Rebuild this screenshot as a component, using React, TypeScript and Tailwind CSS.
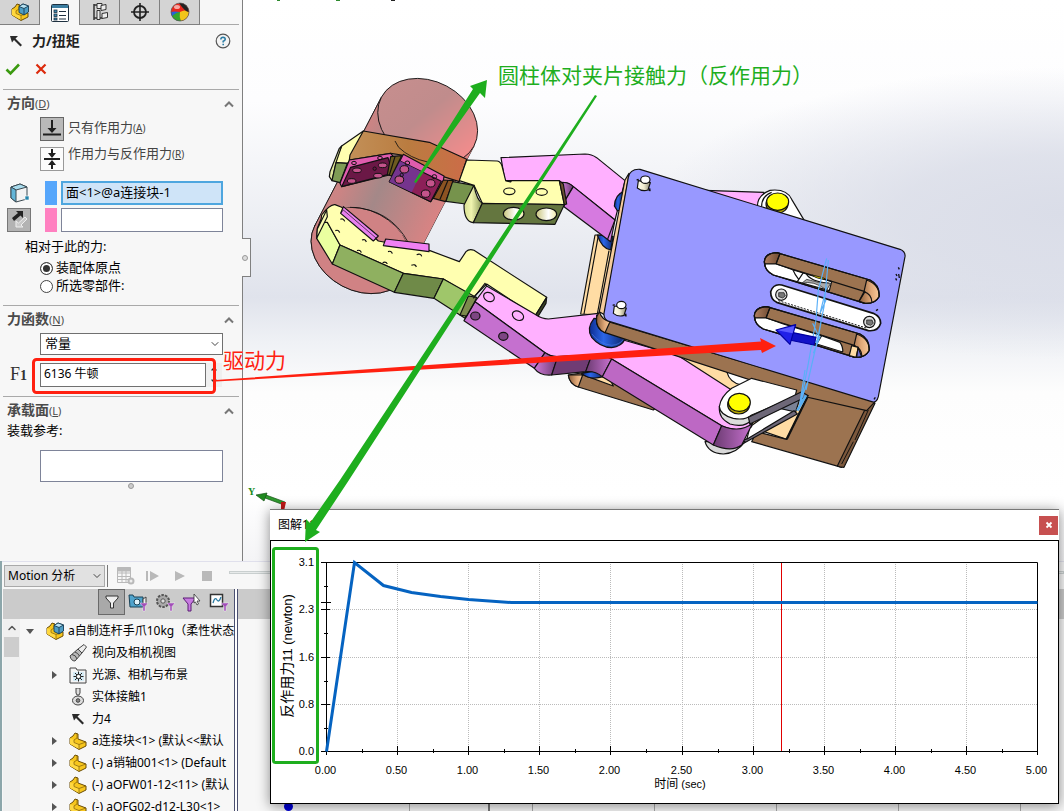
import type { ReactNode } from 'react';
import { ChevronDown, ChevronUp } from 'lucide-react';

/* ---------- small icons ---------- */

function PartIcon({ assembly = false }: { assembly?: boolean }) {
  return (
    <svg viewBox="0 0 18 18" className="w-[18px] h-[18px] shrink-0" strokeLinejoin="round">
      <path d="M1 6 L4 4 L6 1 L9 2 L9 7 L17 10 L17 14 L10 17.5 L1 12 Z" fill="#f7c61c" stroke="#6b4d05" />
      <path d="M1 6 L5 8 L5 10 L10 12.5 L10 17 L1 12 Z" fill="#ffd840" />
      <path d="M5 8 L8 6 L8 2 M10 12.500 L17 10 M5 8 L5 10.500 L10 12.500 L10 17" fill="none" stroke="#8d6a0c" strokeWidth=".8" />
      {assembly && (
        <g stroke="#173d55" strokeWidth=".9">
          <path d="M8 3.500 L12 1 L17.500 3 L17.500 9 L13 12 L8 9.500 Z" fill="#4e9dc4" />
          <path d="M8 3.500 L12 1 L17.500 3 L13 5.500 Z" fill="#b8e2f2" />
          <path d="M13 5.500 L13 12" />
        </g>
      )}
    </svg>
  );
}

function PropertyIcon() {
  return (
    <svg viewBox="0 0 20 20" className="w-5 h-5">
      <rect x="1.500" y="1.500" width="17" height="17" rx="1" fill="#fff" stroke="#1e3040" />
      <rect x="2" y="2" width="16" height="3" fill="#3b7da0" />
      <g fill="#3b8bb4" stroke="#1e3040" strokeWidth=".8">
        <rect x="4" y="7" width="3" height="2.500" />
        <rect x="4" y="11" width="3" height="2.500" />
        <rect x="4" y="15" width="3" height="2" />
      </g>
      <path d="M9 8.500 H16 M9 12.500 H16 M9 16 H16" stroke="#1e3040" strokeWidth="1.200" />
    </svg>
  );
}

function ConfigIcon() {
  return (
    <svg viewBox="0 0 20 20" className="w-5 h-5" fill="#eee" stroke="#333">
      <path d="M4 2 V18 M4 3 H8 M4 16 H12" fill="none" strokeWidth="1.500" />
      <path d="M7 1.500 H12 V6.500 H7 Z M7 8.500 H10 V17.500 H7 Z" />
      <path d="M11 3.500 L16 2.500 V7.500 L11 8.500 Z M12 11.500 L17.500 10.500 V15.500 L12 16.500 Z" />
    </svg>
  );
}

function TargetIcon() {
  return (
    <svg viewBox="0 0 20 20" className="w-5 h-5" fill="none" stroke="#222">
      <circle cx="10" cy="10" r="6" strokeWidth="1.800" />
      <path d="M10 1 V19 M1 10 H19" strokeWidth="1.600" />
    </svg>
  );
}

function AppearanceIcon() {
  return (
    <svg viewBox="0 0 20 20" className="w-5 h-5">
      <circle cx="10" cy="10" r="9" fill="#e8271c" />
      <path d="M1 10 Q4 9 10 10 L9 19 A9 9 0 0 1 1 10 Z" fill="#2563d8" />
      <path d="M2 14 Q7 10 10 10 L11 19 A9 9 0 0 1 2 14 Z" fill="#35a52c" />
      <path d="M10 10 Q15 7 19 10 A9 9 0 0 1 11 19 Q9 15 10 10 Z" fill="#f2c51a" />
      <path d="M9 1 A9 9 0 0 1 19 10 Q15 10 9 1 Z" fill="#222" />
      <ellipse cx="7" cy="5" rx="3" ry="2" fill="#fff" opacity=".6" />
      <circle cx="10" cy="10" r="9" fill="none" stroke="#555" strokeWidth=".7" />
    </svg>
  );
}

function ForceIcon() {
  return (
    <svg viewBox="0 0 14 14" className="w-[14px] h-[14px] shrink-0">
      <path d="M1 2 L9 2 L6.500 4.500 L13 11 L11.500 12.500 L5 6 L3 8.500 Z" fill="#2b2b2b" />
    </svg>
  );
}

function FunnelMark() {
  return <path d="M12 10 H20 L17 13.500 V18 H15 V13.500 Z" fill="#a24fb8" stroke="#fff" strokeWidth=".4" />;
}

function Chevron() {
  return (
    <svg viewBox="0 0 12 8" className="w-3 h-2">
      <path d="M2 6.500 L6 2.500 L10 6.500" fill="none" stroke="#777" strokeWidth="2" />
    </svg>
  );
}

/* ---------- property panel ---------- */

const panelTabs = [
  { name: '特征', icon: <PartIcon assembly /> },
  { name: '属性', icon: <PropertyIcon />, active: true },
  { name: '配置', icon: <ConfigIcon /> },
  { name: '尺寸', icon: <TargetIcon /> },
  { name: '外观', icon: <AppearanceIcon /> },
];

function SectionHead({ title, hotkey }: { title: string; hotkey: string }) {
  return (
    <div className="mx-[3px] border-t border-[#a9a9a9] h-7 pl-1 pr-1 flex items-center justify-between">
      <h3 className="text-sm leading-4 font-bold text-[#4a4a4a]">
        {title}
        <span className="text-[11px] font-normal">
          (<u>{hotkey}</u>)
        </span>
      </h3>
      <button aria-label={title}>
        <Chevron />
      </button>
    </div>
  );
}

function ModeRow({ label, hotkey, pressed, children }: { label: string; hotkey: string; pressed?: boolean; children: ReactNode }) {
  return (
    <button
      className={
        pressed
          ? 'flex items-start h-6 gap-1 pl-10 text-[13px] leading-5 text-[#444]'
          : 'flex items-start h-6 gap-1 pl-10 text-[13px] leading-3 text-[#444]'
      }
      aria-pressed={pressed}
    >
      <span className={pressed ? 'w-6 h-6 border border-[#666] bg-[#b9b9b9]' : 'w-6 h-6 border border-[#999] bg-[#fcfcfc]'}>
        <svg viewBox="0 0 22 22" className="w-[22px] h-[22px]" fill="#1f1f1f" stroke="#1f1f1f">
          {children}
        </svg>
      </span>
      <span>
        {label}
        <span className="text-[10px]">
          (<u>{hotkey}</u>)
        </span>
      </span>
    </button>
  );
}

function PropertyPanel() {
  return (
    <aside className="relative z-10 w-[243px] shrink-0 border-r border-[#808080] bg-[#f7f7f7] flex flex-col">
      <nav className="flex mr-[3px] h-[25px]">
        {panelTabs.map(t => (
          <button
            key={t.name}
            aria-label={t.name}
            className={
              t.active
                ? 'w-10 border-r border-[#808080] flex items-center justify-center'
                : 'w-10 border-r border-b border-[#808080] bg-[#d4d4d4] flex items-center justify-center'
            }
          >
            {t.icon}
          </button>
        ))}
        <span className="flex-1 border-b border-[#a9a9a9]" />
      </nav>

      <header className="h-8 pl-[9px] pr-[11px] flex items-center">
        <ForceIcon />
        <h2 className="ml-[9px] text-sm font-bold text-[#222]">力/扭矩</h2>
        <button aria-label="帮助" className="ml-auto">
          <svg viewBox="0 0 16 16" className="w-4 h-4">
            <circle cx="8" cy="8" r="6.800" fill="#f4f4f4" stroke="#555" strokeWidth="1.200" />
            <path d="M5.800 6.500 Q6 4.300 8 4.300 Q10.300 4.400 10.200 6.300 Q10 7.600 8.200 8.300 L8.200 9.500 M8.200 10.800 V12.300" fill="none" stroke="#2b7ba3" strokeWidth="1.600" />
          </svg>
        </button>
      </header>
      <div className="h-6 pl-[5px] flex items-center gap-[14px] mb-2">
        <button aria-label="确定">
          <svg viewBox="0 0 16 14" className="w-4 h-[14px]">
            <path d="M1.500 7.500 L5.500 11.500 L14 2.500" fill="none" stroke="#3b9a10" strokeWidth="2.600" />
          </svg>
        </button>
        <button aria-label="取消">
          <svg viewBox="0 0 12 12" className="w-3 h-3">
            <path d="M1.500 1.500 L10.500 10.500 M10.500 1.500 L1.500 10.500" stroke="#dc2a0c" strokeWidth="2.200" />
          </svg>
        </button>
      </div>

      <SectionHead title="方向" hotkey="D" />
      <ModeRow label="只有作用力" hotkey="A" pressed>
        <path d="M11 2 V13 M2 16.500 H20" strokeWidth="2" />
        <path d="M6.500 10 H15.500 L11 15 Z" stroke="none" />
      </ModeRow>
      <div className="h-[6px]" />
      <ModeRow label="作用力与反作用力" hotkey="R">
        <path d="M11 1 V6 M11 21 V16 M3 11 H19" strokeWidth="2" />
        <path d="M7 5 H15 L11 10 Z M7 17 H15 L11 12 Z" stroke="none" />
      </ModeRow>

      <div className="mt-[10px] grid grid-cols-[34px_12px_162px] gap-x-1 gap-y-[3px] pl-[7px] items-center">
        <svg viewBox="0 0 24 24" className="w-6 h-6" strokeLinejoin="round">
          <path d="M4 6 L13 3 L20 6 L20 18 L9 21 L4 17 Z" fill="#f3f3f3" stroke="#3b4a52" />
          <path d="M4 6 L13 3 L20 6 L9 9 Z" fill="#a9dcee" stroke="#3b4a52" />
          <path d="M4 6 L9 9 L9 21 L4 17 Z" fill="#62b5d8" stroke="#3b4a52" />
          <rect x="18" y="15" width="4" height="4" fill="#2585ac" stroke="#fff" strokeWidth=".6" />
        </svg>
        <span className="h-6 bg-[#56a6fb]" />
        <input
          aria-label="作用力面"
          defaultValue="面<1>@a连接块-1"
          className="h-6 w-full border-2 border-[#4ea6df] bg-[#cfe4f8] px-[3px] pb-1 text-[13px] text-black outline-none"
        />
        <button aria-label="反向" className="w-6 h-6 border border-[#777] bg-[#b3b3b3]">
          <svg viewBox="0 0 22 22" className="w-[22px] h-[22px]">
            <path d="M4 9 L10 4 L8 2 H15 V9 L12.500 6.500 L6 12 Z" fill="#222" />
            <path d="M19 10 L13 16 L15 18 H8 V12 L10.500 14 L17 8 Z" fill="#c9c9c9" stroke="#eee" />
          </svg>
        </button>
        <span className="h-6 bg-[#ff80c0]" />
        <input aria-label="反作用力面" className="h-6 w-full border border-[#7e8499] bg-white px-1 text-[13px] outline-none" />
      </div>

      <fieldset className="mt-1 text-[13px] text-black">
        <legend className="ml-[25px] h-5 leading-5">相对于此的力:</legend>
        <div className="mt-[3px] mb-[10px] ml-10">
          {['装配体原点', '所选零部件:'].map((name, i) => (
            <label key={name} className="flex items-center gap-[3px] h-[18px]">
              <input
                type="radio"
                name="origin"
                defaultChecked={i === 0}
                className="appearance-none w-[13px] h-[13px] rounded-full border border-[#444] bg-white checked:bg-[#333] checked:shadow-[inset_0_0_0_2px_white]"
              />
              {name}
            </label>
          ))}
        </div>
      </fieldset>

      <SectionHead title="力函数" hotkey="N" />
      <div className="ml-10 mr-[19px] relative">
        <select aria-label="力函数" className="appearance-none block w-full h-[22px] border border-[#707070] bg-white pl-1 pb-[3px] text-[13px] text-black">
          <option>常量</option>
        </select>
        <ChevronDown className="absolute right-[2px] top-[5px] w-3 h-3 text-[#444] pointer-events-none" />
      </div>
      <div className="mt-2 mb-[9px] h-6 pl-[10px] flex items-center">
        <label htmlFor="force" className="w-[30px] font-['Liberation_Serif',serif] text-lg leading-5 text-[#333]">
          F<span className="text-sm font-bold">1</span>
        </label>
        <input id="force" defaultValue="6136 牛顿" className="w-[166px] h-6 border border-[#707070] bg-white px-[3px] pb-1 text-xs text-black outline-none" />
        <span className="flex flex-col justify-between w-4 h-6 py-[2px] items-center bg-[#efefef]">
          <button aria-label="增大"><ChevronUp className="w-2 h-2 text-[#333]" strokeWidth={4} /></button>
          <button aria-label="减小"><ChevronDown className="w-2 h-2 text-[#333]" strokeWidth={4} /></button>
        </span>
      </div>

      <SectionHead title="承载面" hotkey="L" />
      <label htmlFor="bearing" className="ml-[7px] text-[13px] leading-3 text-black">装载参考:</label>
      <textarea id="bearing" className="mt-[14px] ml-10 mr-[19px] h-8 border border-[#7e8499] bg-white resize-none outline-none" />
      <span className="mt-px ml-[128px] w-[6px] h-[6px] rounded-full border border-[#999] bg-[#ccc]" />

      <button aria-label="折叠" className="absolute -right-[9px] top-[238px] w-[9px] h-[39px] border border-l-0 border-[#808080] bg-[#f7f7f7] flex items-center">
        <span className="w-[6px] h-[6px] rounded-full border border-[#999] bg-[#ddd]" />
      </button>
    </aside>
  );
}

/* ---------- 3D model ---------- */

const slot = 'M613 365 Q615 340 650 338 L930 420 Q960 435 957 470 Q945 492 915 490 L640 405 Q612 390 613 365 Z';

function Slot() {
  return (
    <g>
      <path d={slot} fill="#9c7350" />
      <path d="M613 365 Q615 340 650 338 L660 340 L648 372 L615 372 Z" fill="url(#bore)" />
      <path d="M615 372 L650 372 L700 390 L815 425 L808 452 L640 405 Q615 392 615 372 Z" fill="#fff" />
      <path d="M920 420 Q960 435 957 470 Q945 492 915 490 L897 484 L912 455 Z" fill="url(#tan)" />
      <path d="M648 372 L915 455 L897 484 M912 455 Q935 462 936 488 M660 341 L648 372" fill="none" />
      <path d={slot} fill="none" />
    </g>
  );
}

function Pin({ x, y }: { x: number; y: number }) {
  return (
    <g transform={`translate(${x} ${y})`}>
      <path d="M-22 -10 L-16 -12 M14 20 L18 22 L17 15" strokeWidth="4" />
      <path d="M-17 -8 L-20 14 Q-5 26 12 20 L19 -2 Z" fill="url(#pin)" />
      <ellipse cx="4" cy="-11" rx="14" ry="11" fill="#fff" />
    </g>
  );
}

function Model() {
  return (
    <svg viewBox="243 0 821 561" preserveAspectRatio="xMinYMin slice" className="block w-full h-full" strokeLinejoin="round">
      <defs>
        <linearGradient id="face" x1="0" x2="1" y1=".3" y2=".6">
          <stop offset="0" stopColor="#c68e8e" /><stop offset=".45" stopColor="#c08c8c" /><stop offset="1" stopColor="#f28c8c" />
        </linearGradient>
        <linearGradient id="body" x1="0" x2="1" y1="0" y2=".45">
          <stop offset="0" stopColor="#d98a8a" /><stop offset=".35" stopColor="#cb8484" /><stop offset=".55" stopColor="#a48888" /><stop offset="1" stopColor="#e58282" />
        </linearGradient>
        <linearGradient id="orange">
          <stop offset="0" stopColor="#c29058" /><stop offset=".5" stopColor="#ba7c40" /><stop offset="1" stopColor="#cc6c48" />
        </linearGradient>
        <linearGradient id="tan">
          <stop offset="0" stopColor="#8a5c38" /><stop offset=".6" stopColor="#e0a878" /><stop offset="1" stopColor="#f8c898" />
        </linearGradient>
        <linearGradient id="bore">
          <stop offset="0" stopColor="#b08060" /><stop offset="1" stopColor="#6f4a32" />
        </linearGradient>
        <linearGradient id="bend">
          <stop offset="0" stopColor="#d07ad8" /><stop offset="1" stopColor="#6a3a70" />
        </linearGradient>
        <linearGradient id="blend">
          <stop offset="0" stopColor="#6a3a70" /><stop offset="1" stopColor="#c872d0" />
        </linearGradient>
        <linearGradient id="roller">
          <stop offset="0" stopColor="#0c2c90" /><stop offset=".4" stopColor="#2c66e8" /><stop offset="1" stopColor="#0c2468" />
        </linearGradient>
        <linearGradient id="hole">
          <stop offset="0" stopColor="#c8c47c" /><stop offset=".6" stopColor="#fff" /><stop offset="1" stopColor="#efe9a8" />
        </linearGradient>
        <linearGradient id="pin">
          <stop offset="0" stopColor="#fffff0" /><stop offset=".5" stopColor="#f0ecd0" /><stop offset="1" stopColor="#8c8870" />
        </linearGradient>
        <linearGradient id="olive">
          <stop offset="0" stopColor="#d8e090" /><stop offset=".4" stopColor="#f0f4b0" /><stop offset="1" stopColor="#8a9858" />
        </linearGradient>
      </defs>

      {/* bits of geometry cut off by the toolbar */}
      <path d="M277 0 h3 M336 0 h4" stroke="#2f8a2f" strokeWidth="2" />
      <path d="M391 0 h4" stroke="#222" strokeWidth="2" />

      {/* rear frame, upper pink arm, rear housing */}
      <g transform="translate(560 140) scale(.33333)" stroke="#111" strokeWidth="3.500">
        <path d="M105 285 L155 285 L155 330 L118 525 L62 522 Z" fill="#ffdca4" />
        <path d="M115 287 L72 522 M147 332 L112 522" fill="none" />
        <path d="M112 285 Q125 325 152 330 L160 290 Z" fill="url(#roller)" />
        <path d="M-177 53 L75 42 Q95 42 110 53 L195 122 L165 240 L40 140 Q25 127 5 127 L-165 125 Z" fill="#ffb0ff" />
        <path d="M190 155 Q165 165 163 198 L172 212 L190 212 Z" fill="url(#roller)" />
        <path d="M5 128 Q25 125 40 140 L15 182 L5 165 Z" fill="url(#bend)" />
        <path d="M40 140 L165 240 L152 305 L12 200 L15 182 Z" fill="#d67ae0" />
        <path d="M165 240 L143 297" fill="none" />
        <path d="M435 151 L612 157 L595 202 Z" fill="#ffb0ff" />
        <path d="M592 200 Q592 165 630 151 Q680 145 695 178 L735 245 Z" fill="#fff" />
        <path d="M605 205 Q603 168 635 157" fill="none" />
        <ellipse cx="651" cy="192" rx="33" ry="28" fill="#b7a800" />
        <ellipse cx="653" cy="185" rx="33" ry="26" fill="#ffff00" />
      </g>

      {/* cylinder and upper finger, seen through it */}
      <g transform="translate(300 60) scale(.33333)" stroke="#111" strokeWidth="3.500">
        <g strokeWidth="2.500">
          <path d="M244 112 L44 498 A157 121 28 0 0 322 644 L522 258 Z" fill="url(#body)" />
          <ellipse cx="183" cy="571" rx="157" ry="121" transform="rotate(28 183 571)" fill="#d08284" />
          <path d="M244 112 L44 498 Q120 430 180 442 Q290 455 345 600 L522 258 Z" fill="url(#body)" stroke="none" />
          <path d="M150 442 Q270 445 325 548 M244 112 L44 498" fill="none" />
          <ellipse cx="383" cy="185" rx="157" ry="121" transform="rotate(28 383 185)" fill="url(#face)" />
        </g>
        <path d="M190 213 L125 258 L103 308 L142 310 L165 285 Z" fill="#ffffb0" />
        <path d="M125 258 L118 265 L90 335 L88 350 L96 362 L108 308 Z" fill="#dfe79c" />
        <path d="M108 308 L142 310 L120 368 L96 362 Z" fill="#7f9c55" />
        <path d="M190 213 L388 247 L500 298 L478 365 L430 350 L305 285 L272 280 L148 300 L150 285 Z" fill="url(#orange)" />
        <path d="M383 306 Q330 295 296 262 L285 243" fill="none" strokeWidth="2.500" />
        <path d="M148 300 L272 280 L282 292 L268 345 L125 380 L120 370 Z" fill="#e05cae" />
        <path d="M152 322 L264 293 L276 330 L266 343 L125 380 Z" fill="#6b1846" />
        <path d="M272 290 L305 287 L275 348 L262 344 Z" fill="#6d5a20" />
        <path d="M285 290 L268 345" />
        <path d="M310 283 L432 348 L430 365 L392 425 L268 365 Z" fill="#e05cae" />
        <path d="M300 303 L424 364 L392 425 L268 365 Z" fill="#8c2058" />
        <path d="M300 303 L365 335 L335 397 L268 365 Z" fill="#75348e" stroke="none" />
        <path d="M430 360 L460 362 L437 425 L400 415 Z" fill="#8c5322" />
        <path d="M444 361 L420 418" />
        <g fill="#c4548c" strokeWidth="3">
          <ellipse cx="171" cy="331" rx="13" ry="7" /><ellipse cx="248" cy="316" rx="13" ry="7" />
          <ellipse cx="155" cy="363" rx="13" ry="7" /><ellipse cx="234" cy="347" rx="13" ry="7" />
          <ellipse cx="313" cy="328" rx="13" ry="11" /><ellipse cx="392" cy="370" rx="13" ry="11" />
          <ellipse cx="298" cy="359" rx="13" ry="11" /><ellipse cx="377" cy="401" rx="13" ry="11" />
        </g>
        <g fill="none" strokeWidth="3">
          <ellipse cx="162" cy="309" rx="7" ry="5" /><ellipse cx="240" cy="294" rx="7" ry="5" />
          <ellipse cx="322" cy="309" rx="7" ry="6" /><ellipse cx="403" cy="350" rx="7" ry="6" />
          <circle cx="224" cy="326" r="5" /><circle cx="305" cy="345" r="5" />
        </g>
        <path d="M458 365 L522 376 L497 432 L438 424 Z" fill="#76934c" />
        <path d="M500 300 L592 303 Q602 305 606 318 L617 362 L778 362 L793 434 L547 430 L522 376 L478 362 Z" fill="#ffffb0" />
        <path d="M617 362 L632 366 L634 362" fill="#222" />
        <path d="M522 376 Q530 420 547 430 L520 488 Q492 485 492 435 Z" fill="url(#olive)" />
        <path d="M547 430 L793 434 L765 493 L520 488 Z" fill="#64763f" />
        <path d="M778 362 L790 372 L800 432 L793 434 Z" fill="#6d5230" />
        <ellipse cx="628" cy="394" rx="17" ry="10" fill="none" />
        <ellipse cx="725" cy="396" rx="17" ry="10" fill="none" />
        <ellipse cx="641" cy="461" rx="31" ry="19" fill="url(#hole)" />
        <ellipse cx="739" cy="463" rx="31" ry="19" fill="url(#hole)" />

        {/* lower finger */}
        <path d="M82 487 L62 480 L52 505 L50 535 L97 612 L120 555 Z" fill="#eaffa0" />
        <path d="M62 487 L65 465 Q90 432 105 434 L125 442 L235 543 L390 572 L478 605 L498 575 Q508 565 522 571 L740 712 L705 768 L560 672 L520 712 L430 657 L310 640 L120 555 L82 487 Z" fill="#ffffb0" />
        <path d="M62 487 L52 507 L50 535 L82 470 L80 450 Z" fill="#f8fbb0" />
        <path d="M740 712 L705 768 L715 768 L738 730 Z" fill="#3c4524" />
        <path d="M120 555 L310 640 L283 697 L97 612 Z" fill="#8fb060" />
        <path d="M310 640 L430 657 L402 715 L283 697 Z" fill="#6f8a48" />
        <path d="M430 657 L525 710 L495 775 L402 715 Z" fill="#9fc66a" />
        <path d="M505 708 L530 712 L508 770 L480 765 Z" fill="#7c8a4c" />
        <path d="M130 440 L235 528 L220 543 L122 460 Z" fill="#e880ee" />
        <path d="M122 460 L130 450 L228 534" fill="none" strokeWidth="2" />
        <path d="M257 537 L387 552 L387 575 L250 557 Z" fill="#f080f4" />
        <path d="M121 478 q10 -4 13 6 M106 512 q10 -4 13 6 M186 540 q10 -4 13 6 M171 572 q10 -4 13 6 M264 575 q10 -4 13 6 M248 608 q10 -4 14 4 M350 584 q12 -5 15 5 M334 616 q12 -5 15 5" fill="none" />
      </g>

      {/* base body behind the lower arm */}
      <g transform="translate(440 260) scale(.33333)" stroke="#111" strokeWidth="3.500">
        <path d="M385 345 L450 335 L700 400 L640 450 L415 381 Q388 372 385 345 Z" fill="#9c7350" />
        <path d="M385 345 L428 345 L415 381 Q388 372 385 345 Z" fill="url(#tan)" />
        <path d="M425 343 L520 378 L500 340 Z" fill="#ffdca4" />
        <path d="M425 340 Q450 362 490 350 L485 330 Z" fill="url(#roller)" />
        <path d="M700 280 L960 350 L1110 405 L1040 538 L870 480 Z" fill="#ffdca4" />
        <path d="M860 335 Q870 370 905 375 L950 352 Z" fill="#fff" />
        <path d="M1302 428 L1205 622 L935 545 L950 515 L1040 538 L1105 405 L1070 390 L1080 350 Z" fill="#9c7350" />
        <path d="M1305 430 L1212 622 Q1200 622 1192 618 L1285 428 Z" fill="#7c583c" />
        <path d="M1285 450 L1245 540 M1240 545 L1205 612" fill="none" strokeWidth="3" />
        <path d="M1010 445 L1065 400 L1082 408 L1065 462 Z" fill="#7b8296" />
        <path d="M930 500 L1010 443 L1066 456 L920 540 Z" fill="#fff" />
        <path d="M1062 452 L1072 462 L870 572 L870 555 L925 535 Z" fill="#6e6878" />
        <path d="M1105 405 L1040 538" fill="none" strokeWidth="7" />
      </g>

      {/* lower pink arm */}
      <g transform="translate(440 260) scale(.33333)" stroke="#111" strokeWidth="3.500">
        <path d="M795 545 Q805 580 850 582 Q890 580 915 545 Z" fill="#d8d8d8" />
        <path d="M140 78 L285 163 Q305 177 325 177 L475 160 L550 240 L715 287 L870 387 L935 500 Q900 520 845 497 L515 297 Q490 282 455 286 L350 290 Q330 288 315 278 L105 125 Z" fill="#ffb0ff" />
        <path d="M105 125 L315 278 L283 325 L72 182 Z" fill="#c570cf" />
        <path d="M315 278 Q330 290 353 292 L335 345 Q300 348 283 325 Z" fill="url(#bend)" />
        <path d="M353 290 L455 286 L437 335 L335 345 Z" fill="#703c74" />
        <path d="M455 286 Q490 282 515 297 L487 350 Q465 332 437 335 Z" fill="url(#blend)" />
        <path d="M515 297 L845 497 L820 555 L487 350 Z" fill="#bd68c4" />
        <path d="M845 497 Q900 520 938 490 L905 555 Q875 578 820 555 Z" fill="url(#blend)" />
        <ellipse cx="147" cy="111" rx="17" ry="13" fill="none" transform="rotate(30 147 111)" />
        <ellipse cx="234" cy="167" rx="18" ry="13" fill="none" transform="rotate(30 234 167)" />
        <ellipse cx="106" cy="168" rx="14" ry="12" fill="#7d4583" />
        <ellipse cx="190" cy="229" rx="14" ry="12" fill="#7d4583" />
        <path d="M140 78 L135 70 L100 115 M78 172 L105 125" fill="none" />
        <path d="M462 175 Q438 205 455 232 Q480 262 515 263 Q545 260 555 238 L500 180 Z" fill="url(#roller)" />
        <path d="M456 222 Q480 253 515 256 Q540 254 550 238" fill="none" stroke="#4a78e0" strokeWidth="2" />
      </g>

      {/* top plate */}
      <g transform="translate(560 140) scale(.33333)" stroke="#111" strokeWidth="3.500">
        <path d="M145 545 L945 785 L920 812 L700 762 L135 578 Q105 565 110 525 Z" fill="#9c7350" />
        <path d="M118 515 Q125 540 150 545 L135 578 Q105 565 110 530 Z" fill="url(#tan)" />
        <path d="M195 120 L207 100 L205 115 L135 525 L118 515 Z" fill="#f5cc9c" />
        <path d="M205 112 Q210 86 240 88 L1020 328 Q1037 335 1035 350 L955 770 Q950 790 935 785 L150 545 Q130 540 132 520 Z" fill="#9898ff" />
        <Slot />
        <path d="M632 455 Q640 430 665 435 L940 520 Q962 530 962 550 Q955 575 925 572 L650 487 Q632 478 632 455 Z" fill="#fff" strokeWidth="5" />
        <path d="M655 482 L922 565" strokeDasharray="6 4" fill="none" strokeWidth="3" />
        <circle cx="664" cy="464" r="17" fill="#ddd" />
        <path d="M656 458 h16 l4 10 l-8 6 l-12 -4 Z" fill="#777" strokeWidth="2" />
        <circle cx="928" cy="546" r="17" fill="#ddd" />
        <path d="M920 540 h16 l4 10 l-8 6 l-12 -4 Z" fill="#777" strokeWidth="2" />
        <path d="M699 390 Q705 405 716 418 M730 398 L712 425 M738 400 Q750 425 808 430" fill="none" />
        <path d="M725 430 Q760 420 800 450 L812 430 Q775 430 740 418 Z" fill="#aaa" strokeWidth="2" />
        <path d="M757 405 Q770 418 795 417 L792 414 Z" fill="#c8b800" strokeWidth="2" />
        <g transform="translate(-30 162)">
          <Slot />
          <path d="M815 425 L870 445 Q880 460 878 474 L800 450 Z" fill="#fff" />
          <path d="M905 455 L925 460 L918 490 L898 485 Z" fill="#ffdca4" />
          <path d="M924 460 L935 488 L920 490 Z" fill="#6a6ad0" />
        </g>
        <Pin x={252} y={130} />
        <Pin x={180} y={506} />
        <path d="M1015 382 l3 6 M1008 402 l3 6 M1016 402 l2 12 M1007 415 l3 6 M948 512 l6 -4 M942 778 l4 -6" strokeWidth="4" />
      </g>

      {/* front link, pin and load arrow */}
      <g transform="translate(680 300) scale(.33333)" stroke="#111" strokeWidth="3.500">
        <path d="M118 320 Q115 355 150 372 Q195 385 215 358 L210 335 Z" fill="#dcdcdc" />
        <path d="M118 320 Q122 290 155 265 L215 235 L350 270 L345 290 L215 345 Q195 362 160 355 Q120 345 118 320 Z" fill="#fff" />
        <path d="M205 352 L345 285 L365 275 L385 287 L210 372 Z" fill="#6e6878" />
        <ellipse cx="176" cy="314" rx="33" ry="28" fill="#b7a800" />
        <ellipse cx="178" cy="307" rx="33" ry="27" fill="#ffff00" />
        <path d="M378 286 L352 332" stroke="#58aef0" strokeWidth="8" />
        <path
          d="M440 -125 L415 -30 L408 60 L385 190 L360 320 M445 -120 L432 20 L410 130 L378 270 M398 70 L412 100 L395 140 L420 110 L400 160 M440 -40 L420 40 L438 0 M424 60 L412 130 M375 210 L358 320 L380 250"
          fill="none"
          stroke="#5ab0f8"
        />
        <path d="M335 97 L408 112 L402 135 L328 120 Z" fill="#1212c8" stroke="#0000a0" />
        <path d="M288 90 L347 74 L330 133 Z" fill="#2020e8" stroke="#0000a0" />
        <path d="M292 91 L343 78 L338 100 Z" fill="#5a5aff" stroke="none" />
      </g>

      {/* view triad */}
      <path d="M284 505 L265 498 L266 495 L285 502 Z" fill="#2f9a2f" stroke="#155515" strokeWidth=".7" />
      <path d="M256 495 L267 493 L264 501 Z" fill="#1f8a1f" stroke="#155515" strokeWidth=".7" />
      <path d="M281 502 L286 502 L284 511 L281 511 Z" fill="#c01818" />
      <text x="248" y="495" className="font-['Liberation_Serif',serif] text-[10px] font-bold" fill="#1a8a1a">Y</text>
    </svg>
  );
}

/* ---------- motion study ---------- */

const ContactIcon = (
  <svg viewBox="0 0 18 18" className="w-[18px] h-[18px] shrink-0" fill="#ddd" stroke="#444">
    <path d="M7 0 H11 V5 L10 7 H8 L7 5 Z" />
    <ellipse cx="9" cy="12.500" rx="5.500" ry="4.500" />
    <circle cx="9" cy="12.500" r="1.800" fill="#888" />
  </svg>
);

const CameraIcon = (
  <svg viewBox="0 0 18 18" className="w-[18px] h-[18px] shrink-0" fill="#b9b9b9" stroke="#444">
    <path d="M1 12 L9 5 L13 9 L6 17 Q2 17 1 12 Z" />
    <path d="M9 5 L15 0.500 L17.500 3 L13 9 Z" fill="#eee" />
    <path d="M3 10.500 Q7 11 8 15 M6 8 Q9 9 10.500 12" fill="none" />
  </svg>
);

const LightsIcon = (
  <svg viewBox="0 0 18 18" className="w-[18px] h-[18px] shrink-0">
    <path d="M1 2 H7 L8 4 H17 V17 H1 Z" fill="#f5f5f5" stroke="#444" />
    <rect x="4" y="6" width="11" height="9" fill="#d5ebf5" />
    <path d="M9.500 5.500 V15.500 M4.500 10.500 H14.500 M6 7 L13 14 M13 7 L6 14" stroke="#222" />
    <circle cx="9.500" cy="10.500" r="2.200" fill="#fff" stroke="#222" />
  </svg>
);

const treeItems = [
  { text: '视向及相机视图', icon: CameraIcon },
  { text: '光源、相机与布景', icon: LightsIcon, open: true },
  { text: '实体接触1', icon: ContactIcon },
  { text: '力4', icon: <span className="w-[18px] pl-[2px]"><ForceIcon /></span> },
  { text: 'a连接块<1> (默认<<默认', icon: <PartIcon />, open: true },
  { text: '(-) a销轴001<1> (Default', icon: <PartIcon />, open: true },
  { text: '(-) aOFW01-12<11> (默认', icon: <PartIcon />, open: true },
  { text: '(-) aOFG02-d12-L30<1>', icon: <PartIcon />, open: true },
];

function MotionTree() {
  return (
    <div className="w-[231px] shrink-0 flex flex-col overflow-hidden">
      <div className="h-[30px] shrink-0 bg-[#cbcbcb] pl-[95px] flex items-start gap-[7px]">
        <button aria-label="过滤" className="w-[27px] h-[26px] border border-[#6a6a6a] bg-[#a9a9a9] flex items-center justify-center">
          <svg viewBox="0 0 16 16" className="w-4 h-4">
            <path d="M2 2 H14 V4 L9.500 9 V14 H6.500 V9 L2 4 Z" fill="#eee" stroke="#333" />
          </svg>
        </button>
        <button aria-label="过滤动画" className="-ml-1 mt-1">
          <svg viewBox="0 0 20 20" className="w-5 h-5">
            <path d="M1 2 H5 L6 4 H15 V14 H2 Z" fill="#4fa3cc" stroke="#1a4256" />
            <circle cx="9" cy="9" r="3" fill="#dff2fa" stroke="#1a4256" />
            <path d="M15 6 L18 4 V12 L15 10 Z" fill="#eee" stroke="#444" />
            <FunnelMark />
          </svg>
        </button>
        <button aria-label="过滤驱动" className="mt-1">
          <svg viewBox="0 0 20 20" className="w-5 h-5">
            <circle cx="8" cy="8" r="6" fill="#aaa" stroke="#555" strokeWidth="2" strokeDasharray="2.500 1.200" />
            <circle cx="8" cy="8" r="2.200" fill="#ddd" stroke="#555" />
            <FunnelMark />
          </svg>
        </button>
        <button aria-label="过滤选定" className="mt-1">
          <svg viewBox="0 0 20 20" className="w-5 h-5">
            <path d="M1 5 H14 L9 11 V18 H6 V11 Z" fill="#c77be0" stroke="#5c1d76" />
            <path d="M12 1 L18 8 L15 8 L16.500 11 L15 12 L13.500 9 L12 10 Z" fill="#fff" stroke="#333" strokeWidth=".8" />
          </svg>
        </button>
        <button aria-label="过滤结果" className="mt-1">
          <svg viewBox="0 0 20 20" className="w-5 h-5">
            <rect x="1.500" y="1.500" width="12" height="12" fill="#fff" stroke="#333" strokeWidth="1.500" />
            <path d="M4 10 Q6 3 8 7 Q10 10 12 4" fill="none" stroke="#2b7ba3" strokeWidth="1.300" />
            <FunnelMark />
          </svg>
        </button>
      </div>
      <div className="flex flex-1 overflow-hidden">
        <div className="w-[17px] shrink-0 bg-[#f0f0f0] flex flex-col items-center">
          <ChevronUp className="my-[3px] w-3 h-3 text-[#555]" strokeWidth={3} />
          <span className="w-[15px] h-5 bg-[#cdcdcd]" />
        </div>
        <ul className="pt-px text-xs text-black whitespace-nowrap">
          <li className="flex items-center h-[22px] pl-[6px]">
            <svg viewBox="0 0 8 5" className="w-2 h-[5px] mr-3"><path d="M0 0 H8 L4 5 Z" fill="#555" /></svg>
            <PartIcon assembly />
            <span className="ml-1">a自制连杆手爪10kg（柔性状态</span>
          </li>
          {treeItems.map(item => (
            <li key={item.text} className="flex items-center h-[22px] pl-8">
              <span className="w-[17px]">
                {item.open && <svg viewBox="0 0 5 8" className="w-[5px] h-2"><path d="M0 0 L5 4 L0 8 Z" fill="#555" /></svg>}
              </span>
              {item.icon}
              <span className="ml-[5px]">{item.text}</span>
            </li>
          ))}
        </ul>
      </div>
    </div>
  );
}

function MotionPanel() {
  return (
    <section className="h-[250px] shrink-0 flex flex-col border-l-2 border-[#8ca6aa] bg-[#f7f7f7]">
      <div className="h-7 shrink-0 border-t border-[#e0e0ec] flex items-center pl-[2px]">
        <div className="relative">
          <select aria-label="算例类型" className="appearance-none block w-[101px] h-[22px] border border-[#a9a9a9] bg-[#e1e1e1] pl-[3px] text-xs text-black">
            <option>Motion 分析</option>
          </select>
          <ChevronDown className="absolute right-[2px] top-[5px] w-3 h-3 text-[#444] pointer-events-none" />
        </div>
        <span className="ml-[2px] w-px h-[22px] bg-[#777]" />
        <button aria-label="计算" className="ml-[9px]">
          <svg viewBox="0 0 18 18" className="w-[18px] h-[18px]" stroke="#b9b9b9" fill="none">
            <path d="M.5 .5 H13.500 V15.500 H.5 Z M.5 6 H13 M.5 9.500 H13 M.5 12.500 H13 M5 4 V15 M9 4 V15" />
            <rect x="1" y="1" width="12" height="3" fill="#b9b9b9" />
            <circle cx="14" cy="14" r="2.500" fill="#eee" strokeWidth="2" />
          </svg>
        </button>
        <button aria-label="从头播放" className="ml-[11px]">
          <svg viewBox="0 0 14 10" className="w-[14px] h-[10px]" fill="#b9b9b9"><path d="M0 0 H2 V10 H0 Z M4 0 L13 5 L4 10 Z" /></svg>
        </button>
        <button aria-label="播放" className="ml-[15px]">
          <svg viewBox="0 0 10 10" className="w-[10px] h-[10px]" fill="#b9b9b9"><path d="M0 0 L10 5 L0 10 Z" /></svg>
        </button>
        <button aria-label="停止" className="ml-[17px] w-[10px] h-[10px] bg-[#b9b9b9]" />
        <span className="ml-[17px] mb-[6px] flex-1 h-[3px] border border-[#c9cfcf] bg-[#e7eaea]" />
      </div>
      <div className="flex-1 flex min-h-0 pl-px">
        <MotionTree />
        <div className="w-1 shrink-0 border-x border-[#4a4f70] bg-white" />
        <div className="flex-1 flex flex-col">
          <div className="h-[30px] bg-[#cbcbcb]" />
          <div className="flex-1 flex items-end pl-[46px]">
            <span className="w-[9px] h-[9px] rounded-full bg-[#0000d8]" />
            <span className="ml-[116px] w-px h-2 bg-[#aaa]" />
            <span className="ml-[78px] w-[2px] h-2 bg-[#777]" />
            <span className="ml-[42px] w-px h-2 bg-[#aaa]" />
            <span className="ml-[121px] w-px h-2 bg-[#aaa]" />
            <span className="ml-[121px] w-px h-2 bg-[#aaa]" />
            <span className="ml-[121px] w-px h-2 bg-[#aaa]" />
            <span className="ml-[121px] w-px h-2 bg-[#aaa]" />
          </div>
        </div>
      </div>
    </section>
  );
}

/* ---------- result plot ---------- */

const curve = [
  [0, 189], [28, 0], [57, 23], [85, 30], [114, 34], [142, 37], [185, 40], [711, 40],
];
const yLabels = ['3.1', '2.3', '1.6', '0.8', '0.0'];
const xLabels = ['0.00', '0.50', '1.00', '1.50', '2.00', '2.50', '3.00', '3.50', '4.00', '4.50', '5.00'];

function PlotWindow() {
  // plot area is 711 x 189 with its top left corner at 55, 21
  const gx = (i: number) => Math.round(55 + i * 71.1) + 0.5;
  const gy = (i: number) => Math.round(21 + i * 47.25) + 0.5;
  const line = curve.map(([x, y]) => `${55.5 + x},${21.5 + y}`).join(' ');

  return (
    <section className="absolute left-[270px] right-[5px] bottom-[7px] border-t border-[#777] bg-white shadow-[0_2px_12px_rgba(0,0,0,0.45)]">
      <header className="h-[30px] pl-2 pr-px flex items-center justify-between text-xs text-black">
        <h2>图解11</h2>
        <button aria-label="关闭" className="w-[19px] h-[19px] bg-[#c75050] flex items-center justify-center">
          <svg viewBox="0 0 8 8" className="w-2 h-2"><path d="M1.500 1.500 L6.500 6.500 M6.500 1.500 L1.500 6.500" stroke="#fff" strokeWidth="1.800" /></svg>
        </button>
      </header>
      <div className="border border-black">
        <svg viewBox="0 0 787 262" className="block w-full font-['Liberation_Sans','Noto_Sans_CJK_SC',sans-serif] text-[11px]">
          <g stroke="#bbb" strokeDasharray="1 1">
            {[1, 2, 3, 4, 5, 6, 7, 8, 9].map(i => <path key={i} d={`M${gx(i)} 21 V210`} />)}
            {[1, 2, 3].map(i => <path key={i} d={`M55 ${gy(i)} H766`} />)}
          </g>
          <g stroke="#000">
            {yLabels.map((l, i) => <path key={l} d={`M50 ${gy(i)} H59`} />)}
            {[0, 1, 2, 3].map(i => <path key={i} d={`M53 ${gy(i) + 24} H57`} />)}
            {xLabels.map((l, i) => <path key={l} d={`M${gx(i)} 205 V214`} />)}
            {xLabels.slice(1).map((l, i) => <path key={l} d={`M${gx(i) + 36} 208 V212`} />)}
            <path d="M50 61.500 H60" />
            <path d="M55.500 21.500 H766.500 V210.500 H55.500 Z" fill="none" />
          </g>
          <path d="M510.500 22 V210" stroke="#e00000" />
          <polyline points={line} fill="none" stroke="#0563c1" strokeWidth="3" />
          {yLabels.map((l, i) => <text key={l} x="43" y={gy(i) + 3} textAnchor="end">{l}</text>)}
          {xLabels.map((l, i) => <text key={l} x={gx(i) - 1} y="233" textAnchor="middle">{l}</text>)}
          <text x="409" y="247" textAnchor="middle"><tspan className="text-xs">时间</tspan> (sec)</text>
          <text transform="rotate(-90 21 115)" x="21" y="115" textAnchor="middle" className="text-sm">
            反作用力<tspan className="text-[13px]">11 (newton)</tspan>
          </text>
        </svg>
      </div>
    </section>
  );
}

/* ---------- notes drawn over the whole window ---------- */

function Notes() {
  return (
    <div className="absolute inset-0 z-20 pointer-events-none">
      <svg width="1064" height="811" className="block">
        <rect x="33.500" y="359.500" width="181" height="33" rx="3" fill="none" stroke="#ff2010" strokeWidth="3" />
        <path d="M216 380 L761 341.500 L760 338 L776 346 L762 353 L761 350 L216 381.500 Z" fill="#ff2010" />
        <rect x="273.500" y="548.500" width="44" height="214" rx="2" fill="none" stroke="#1eae1e" strokeWidth="3" />
        <path d="M414 182 L473 89 L470 86 L487 80 L485 98 L480 93 L416 183 Z" fill="#1eae1e" />
        <path d="M595 95 L340 480 L310 523 L306 519 L305 542 L320 532 L316 530 L349 480 L597 96 Z" fill="#1eae1e" />
      </svg>
      <p className="absolute left-[498px] top-[60px] text-[21px] leading-[30px] text-[#1eae1e] whitespace-nowrap">圆柱体对夹片接触力（反作用力）</p>
      <p className="absolute left-[223px] top-[345px] text-[21px] leading-[30px] text-[#ff2010] whitespace-nowrap">驱动力</p>
    </div>
  );
}

export default function App() {
  return (
    <div className="relative h-screen overflow-hidden flex flex-col font-['Noto_Sans','Noto_Sans_CJK_SC',sans-serif]">
      <div className="flex-1 min-h-0 flex">
        <PropertyPanel />
        <main className="flex-1 min-w-0 overflow-hidden bg-[radial-gradient(ellipse_50%_26%_at_100%_38%,#dadde8_0%,#dadde8cc_40%,#dadde800_100%),linear-gradient(to_bottom,#ffffff_0%,#fdfdfe_18%,#eceef3_40%,#e0e3ec_53%,#eff1f5_61%,#fdfdfd_70%,#ffffff_88%,#f4f4f6_100%)]">
          <Model />
        </main>
      </div>
      <MotionPanel />
      <PlotWindow />
      <Notes />
    </div>
  );
}
